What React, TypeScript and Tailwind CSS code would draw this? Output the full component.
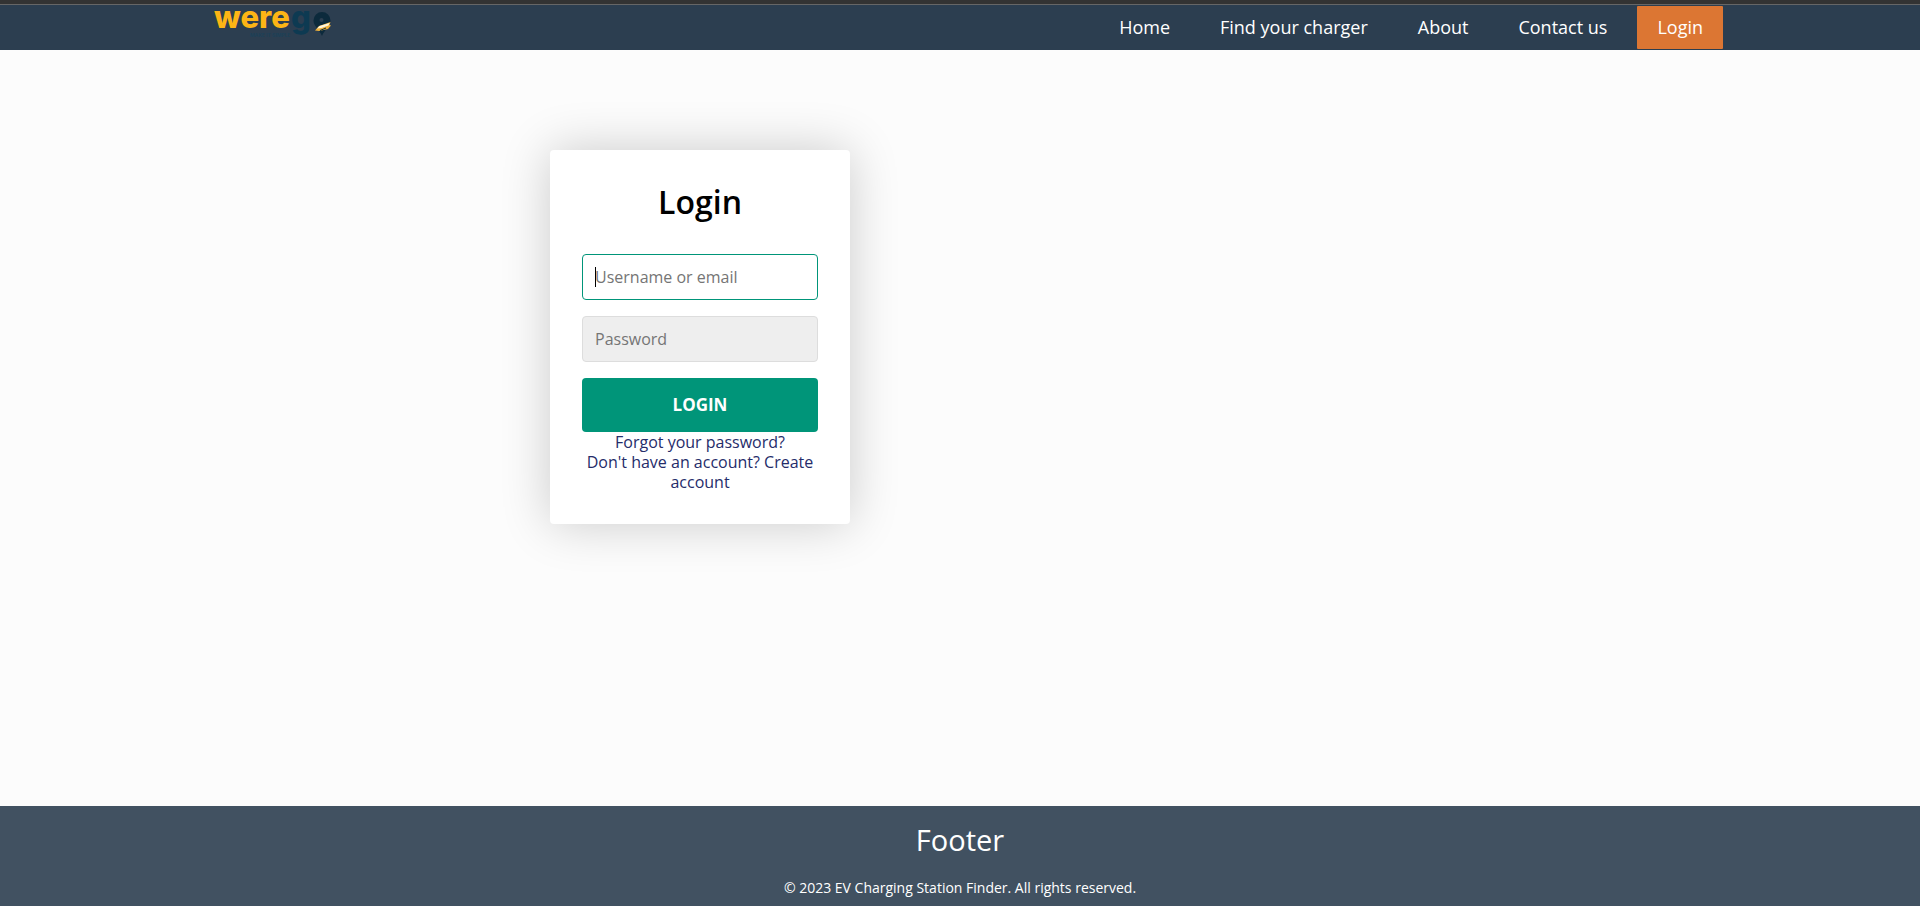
const links = ["Home", "Find your charger", "About", "Contact us"];

function Logo() {
  return (
    <a href="#" aria-label="werego" className="ml-5 shrink-0">
      <svg width="124" height="45" viewBox="0 0 124 45" overflow="visible">
        <text x="2" y="23" fontFamily="Inter, sans-serif" fontWeight="800" fontSize="31" fill="#fdb515">
          were<tspan x="79" fill="#0d3a52">g</tspan>
        </text>
        <text x="38" y="32" fontFamily="Inter, sans-serif" fontWeight="600" fontSize="5" fill="#1b4158">MAKE IT SIMPLE</text>
        <path d="M110 7a8.500 8.500 0 0 1 8.500 8.500c0 5.500-5.500 8.500-8.500 15.500-3-7-8.500-10-8.500-15.500A8.500 8.500 0 0 1 110 7z" fill="#0c2a3c" />
        <circle cx="109.500" cy="15" r="2" fill="#2c3e50" />
        <path d="M103 25.500l4-4.500 11.500-4-1 3 1.500.5-3 3.500-9 2z" fill="#f0b23c" />
        <path d="M105 23.500l2.500-2.500 10-3-1 2.500-7 2.500z" fill="#fff6dc" />
        <path d="M108 25.500l6-2.500" stroke="#0c2a3c" strokeWidth="1" />
      </svg>
    </a>
  );
}

export default function App() {
  return (
    <div className="flex min-h-screen flex-col bg-[#fcfcfc] font-['Open_Sans',sans-serif]">
      <header className="border-t-4 border-[#333333] bg-[#2c3e50]">
        <div className="flex h-[46px] items-center justify-between border-t border-[#666666] px-[10%]">
          <Logo />
          <nav className="flex items-center gap-2.5 pr-[5px] text-lg text-white">
            {links.map((label) => (
              <a key={label} href="#" className="px-5 py-2 leading-[27px]">{label}</a>
            ))}
            <a href="#" className="rounded-[1px] bg-[#dc7633] px-5 py-2 leading-[27px]">Login</a>
          </nav>
        </div>
      </header>

      <main className="w-full max-w-[1400px] grow px-4 py-[100px]">
        <form className="mx-auto w-[300px] rounded bg-white p-8 text-center shadow-[0_0_50px_rgba(0,0,0,0.2)]">
          <h1 className="mb-8 text-[32px] leading-10 font-semibold text-black">Login</h1>
          <div className="relative mb-4">
            <input
              type="text"
              aria-label="Username or email"
              placeholder="Username or email"
              className="block h-[46px] w-full rounded border border-[#009579] bg-white px-3 text-base outline-none placeholder:text-[#757575]"
            />
            <span aria-hidden="true" className="absolute top-[13px] left-[13px] h-5 w-px bg-black" />
          </div>
          <input
            type="password"
            aria-label="Password"
            placeholder="Password"
            className="mb-4 block h-[46px] w-full rounded border border-[#dddddd] bg-[#eeeeee] px-3 text-base outline-none placeholder:text-[#757575]"
          />
          <button type="submit" className="block h-[54px] w-full rounded bg-[#009579] text-[17px] font-bold text-white">LOGIN</button>
          <a href="#" className="block text-base leading-5 text-[#252c6a]">Forgot your password?</a>
          <a href="#" className="block text-base leading-5 text-[#252c6a]">Don't have an account? Create account</a>
        </form>
      </main>

      <footer className="bg-[#415161] pt-4 pb-2 text-center text-white">
        <h2 className="mb-5 text-[29px] leading-9">Footer</h2>
        <p className="text-sm leading-5">© 2023 EV Charging Station Finder. All rights reserved.</p>
      </footer>
    </div>
  );
}
